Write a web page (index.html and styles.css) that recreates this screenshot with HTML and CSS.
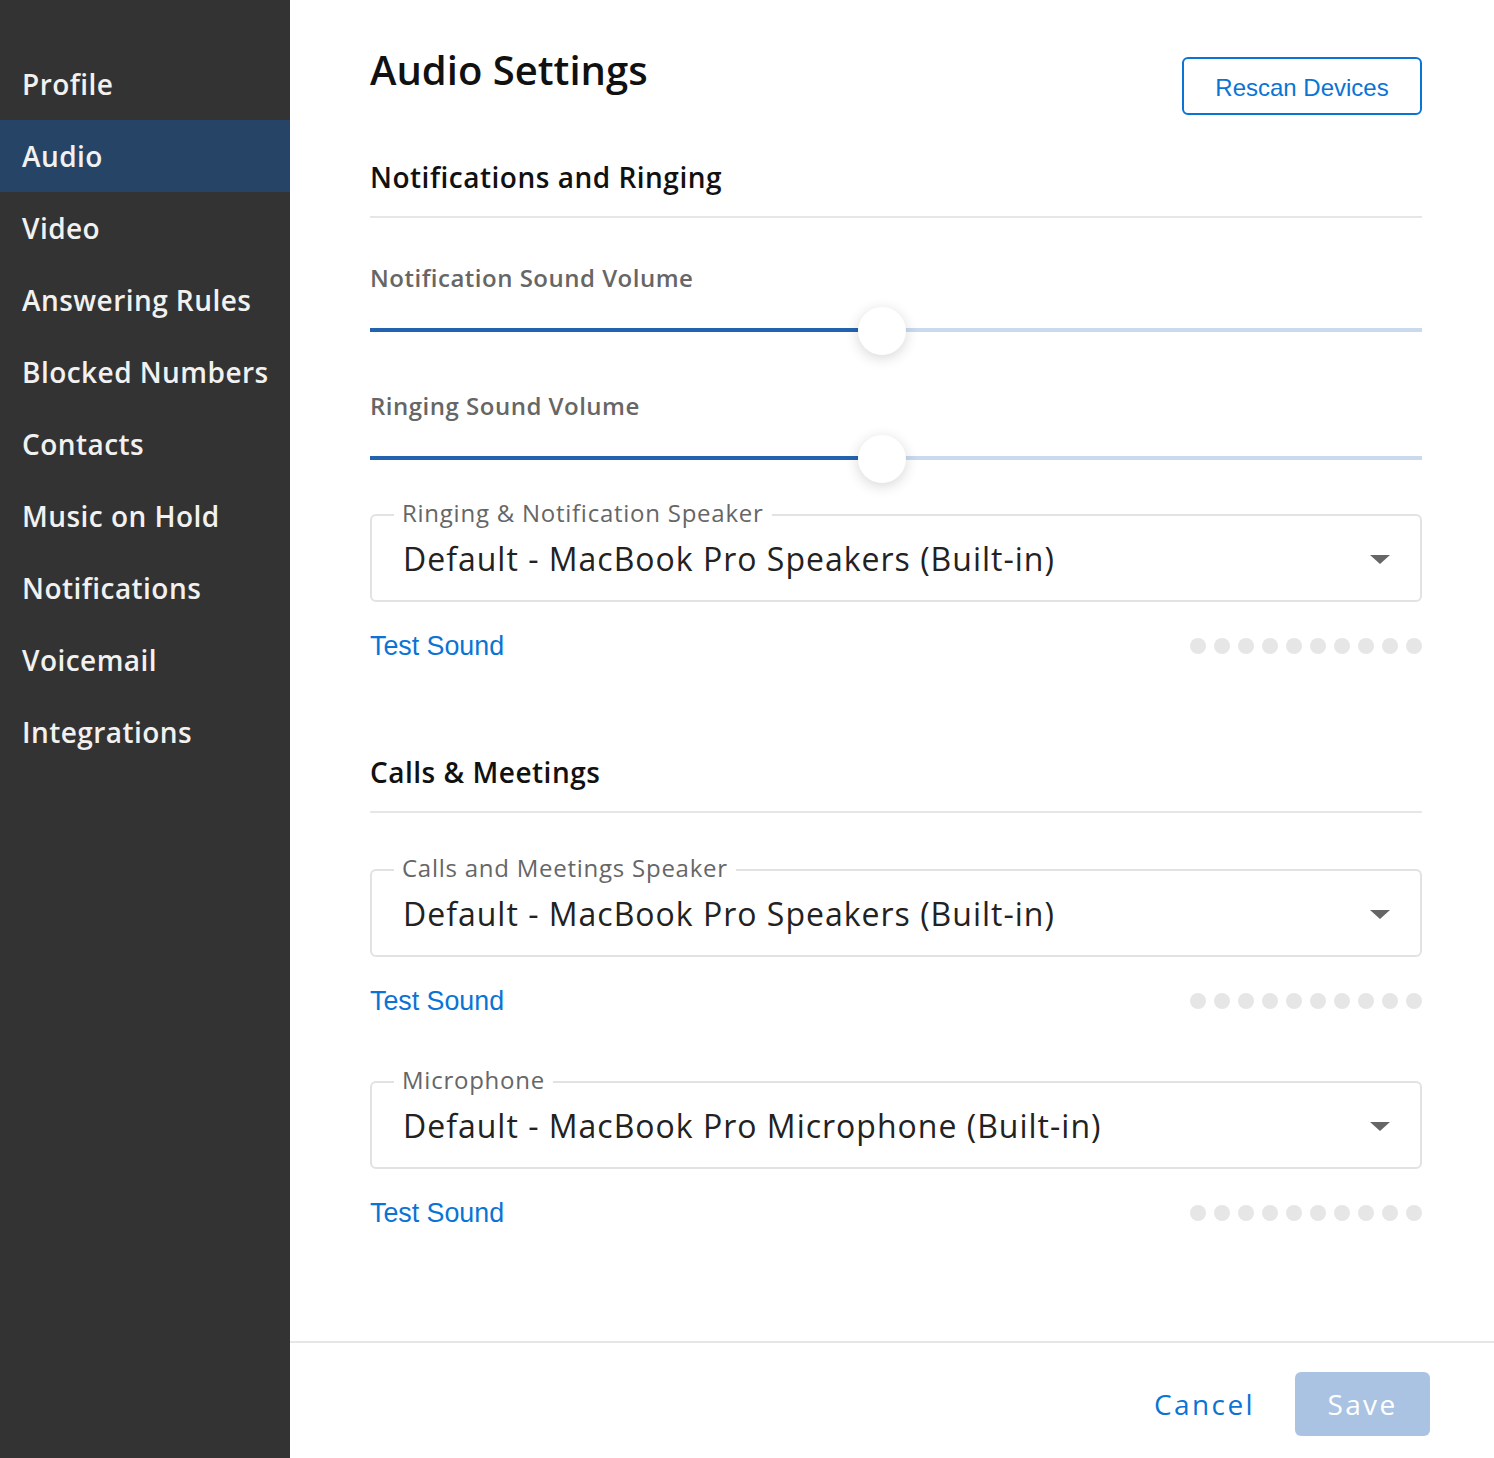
FILE: index.html
```html
<!DOCTYPE html>
<html lang="en">
<head>
<meta charset="utf-8">
<title>Audio Settings</title>
<link rel="stylesheet" href="styles.css">
</head>
<body>
<div class="app">
  <nav class="sidebar">
    <a class="nav-item">Profile</a>
    <a class="nav-item active">Audio</a>
    <a class="nav-item">Video</a>
    <a class="nav-item">Answering Rules</a>
    <a class="nav-item">Blocked Numbers</a>
    <a class="nav-item">Contacts</a>
    <a class="nav-item">Music on Hold</a>
    <a class="nav-item">Notifications</a>
    <a class="nav-item">Voicemail</a>
    <a class="nav-item">Integrations</a>
  </nav>
  <main class="main">
    <div class="content">
      <header class="page-header">
        <h1 class="page-title">Audio Settings</h1>
        <button class="btn-outline">Rescan Devices</button>
      </header>

      <h2 class="section-title">Notifications and Ringing</h2>

      <div class="field-label first">Notification Sound Volume</div>
      <div class="slider">
        <div class="track"><div class="fill" style="width:46.4%"></div></div>
        <div class="thumb" style="left:46.4%"></div>
      </div>

      <div class="field-label">Ringing Sound Volume</div>
      <div class="slider">
        <div class="track"><div class="fill" style="width:46.4%"></div></div>
        <div class="thumb" style="left:46.4%"></div>
      </div>

      <fieldset class="select select-first">
        <legend>Ringing &amp; Notification Speaker</legend>
        <div class="select-row">
          <span class="select-value">Default - MacBook Pro Speakers (Built-in)</span>
          <span class="caret"></span>
        </div>
      </fieldset>
      <div class="test-row">
        <a class="test-link">Test Sound</a>
        <div class="meter"><i></i><i></i><i></i><i></i><i></i><i></i><i></i><i></i><i></i><i></i></div>
      </div>

      <h2 class="section-title second">Calls &amp; Meetings</h2>

      <fieldset class="select select-calls">
        <legend>Calls and Meetings Speaker</legend>
        <div class="select-row">
          <span class="select-value">Default - MacBook Pro Speakers (Built-in)</span>
          <span class="caret"></span>
        </div>
      </fieldset>
      <div class="test-row">
        <a class="test-link">Test Sound</a>
        <div class="meter"><i></i><i></i><i></i><i></i><i></i><i></i><i></i><i></i><i></i><i></i></div>
      </div>

      <fieldset class="select select-mic">
        <legend>Microphone</legend>
        <div class="select-row">
          <span class="select-value">Default - MacBook Pro Microphone (Built-in)</span>
          <span class="caret"></span>
        </div>
      </fieldset>
      <div class="test-row">
        <a class="test-link">Test Sound</a>
        <div class="meter"><i></i><i></i><i></i><i></i><i></i><i></i><i></i><i></i><i></i><i></i></div>
      </div>
    </div>
    <footer class="footer">
      <button class="btn-link">Cancel</button>
      <button class="btn-save">Save</button>
    </footer>
  </main>
</div>
</body>
</html>
```
FILE: styles.css
```css
* { box-sizing: border-box; }
html, body { margin: 0; padding: 0; }
body {
  font-family: "Open Sans", "Noto Sans", sans-serif;
  background: #fff;
  color: #111;
}
.app {
  display: flex;
  min-height: 100vh;
}
.sidebar {
  width: 290px;
  flex: 0 0 290px;
  background: #333333;
  padding-top: 48px;
  display: flex;
  flex-direction: column;
}
.nav-item {
  height: 72px;
  display: flex;
  align-items: center;
  padding-left: 22px;
  font-size: 28px;
  font-weight: 600;
  letter-spacing: 0.45px;
  color: #f1f1f1;
  text-decoration: none;
}
.nav-item.active {
  background: #264466;
}
.main {
  flex: 1;
  display: flex;
  flex-direction: column;
  min-width: 0;
}
.content {
  flex: 1;
  padding: 46px 72px 0 80px;
  display: flex;
  flex-direction: column;
}
.page-header {
  display: flex;
  justify-content: space-between;
  align-items: flex-start;
}
.page-title {
  margin: 0;
  font-size: 40px;
  line-height: 48px;
  font-weight: 600;
  color: #111;
}
.btn-outline {
  margin-top: 11px;
  width: 240px;
  height: 58px;
  padding: 3px 0 0 0;
  border: 2px solid #0a74d4;
  border-radius: 6px;
  background: #fff;
  color: #0a74d4;
  font-family: "Liberation Sans", Arial, sans-serif;
  font-size: 24px;
  cursor: pointer;
}
.section-title {
  margin: 44px 0 0 0;
  font-size: 28px;
  line-height: 36px;
  font-weight: 600;
  letter-spacing: 0.5px;
  color: #111;
  padding-bottom: 21px;
  border-bottom: 2px solid #e6e6e6;
}
.section-title.second {
  margin-top: 93px;
}
.field-label {
  margin-top: 35px;
  font-size: 24px;
  line-height: 32px;
  font-weight: 600;
  letter-spacing: 0.5px;
  color: #666;
}
.field-label.first {
  margin-top: 44px;
}
.slider {
  position: relative;
  margin-top: 13px;
  height: 48px;
}
.track {
  position: absolute;
  left: 0;
  right: 0;
  top: 21px;
  height: 4px;
  background: #c9d9ee;
}
.fill {
  height: 100%;
  background: #2263b0;
}
.thumb {
  position: absolute;
  top: 0;
  width: 48px;
  height: 48px;
  border-radius: 50%;
  background: #fff;
  box-shadow: 0 3px 14px rgba(0, 0, 0, 0.16);
}
.select {
  margin: 14px 0 0 0;
  padding: 1px 30px 16px 22px;
  border: 2px solid #e2e2e2;
  border-radius: 6px;
  min-width: 0;
}
.select-calls { margin-top: 39px; }
.select-mic { margin-top: 48px; }
.select legend {
  padding: 0 8px 4px 8px;
  font-size: 24px;
  line-height: 32px;
  color: #666;
  letter-spacing: 0.75px;
}
.select-row {
  display: flex;
  align-items: center;
  justify-content: space-between;
  padding-left: 9px;
  height: 50px;
}
.select-value {
  font-size: 32px;
  line-height: 40px;
  color: #222;
  letter-spacing: 1px;
}
.caret {
  width: 0;
  height: 0;
  border-left: 10px solid transparent;
  border-right: 10px solid transparent;
  border-top: 9px solid #666;
}
.test-row {
  margin-top: 29px;
  height: 30px;
  display: flex;
  align-items: center;
  justify-content: space-between;
}
.test-link {
  font-family: "Liberation Sans", Arial, sans-serif;
  font-size: 26.8px;
  color: #0a74d4;
  cursor: pointer;
}
.meter {
  display: flex;
  gap: 8px;
}
.meter i {
  width: 16px;
  height: 16px;
  border-radius: 50%;
  background: #e6e6e6;
}
.footer {
  height: 117px;
  border-top: 2px solid #e6e6e6;
  display: flex;
  justify-content: flex-end;
  align-items: flex-start;
  padding: 29px 64px 0 0;
  gap: 28px;
}
.btn-link {
  height: 64px;
  padding: 0 12px;
  background: none;
  border: none;
  font-family: "Open Sans", sans-serif;
  font-size: 28px;
  letter-spacing: 2.4px;
  color: #0a74d4;
  cursor: pointer;
}
.btn-save {
  width: 135px;
  height: 64px;
  border: none;
  border-radius: 6px;
  background: #abc3e2;
  color: #fff;
  font-family: "Open Sans", sans-serif;
  font-size: 28px;
  letter-spacing: 2.4px;
  cursor: default;
}
```
